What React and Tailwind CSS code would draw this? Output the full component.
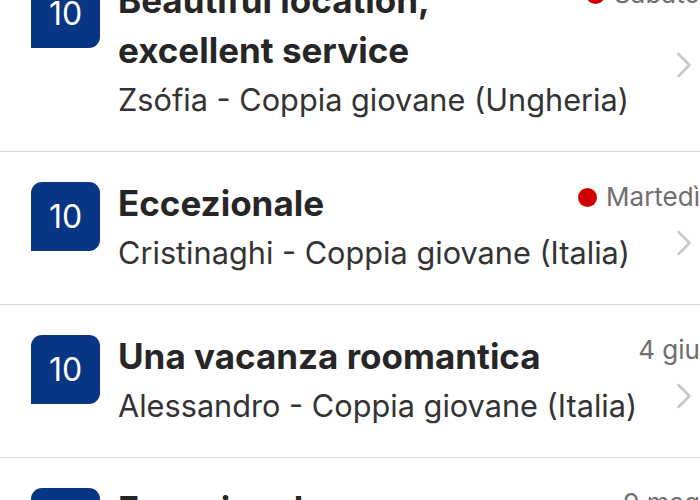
const REVIEWS = [
  {
    id: 1,
    score: 10,
    title: ['Beautiful location,', 'excellent service'],
    author: 'Zsófia - Coppia giovane (Ungheria)',
    date: 'Sabato',
    unread: true,
  },
  {
    id: 2,
    score: 10,
    title: ['Eccezionale'],
    author: 'Cristinaghi - Coppia giovane (Italia)',
    date: 'Martedì',
    unread: true,
  },
  {
    id: 3,
    score: 10,
    title: ['Una vacanza roomantica'],
    author: 'Alessandro - Coppia giovane (Italia)',
    date: '4 giu',
  },
  {
    id: 4,
    score: 10,
    title: ['Eccezionale'],
    author: 'Marco - Famiglia (Italia)',
    date: '9 mag',
  },
]

function Chevron() {
  return (
    <svg width="16" height="26" viewBox="0 0 16 26" fill="none">
      <path d="M2.5 2L13.5 13L2.5 24" stroke="#c7c7cc" strokeWidth="2.6" strokeLinecap="round" strokeLinejoin="round" />
    </svg>
  )
}

function ReviewRow({ review }) {
  return (
    <div className="flex border-b border-[#d6d6d6] pl-[31px]">
      <div className="mt-[30px] flex h-[69px] w-[69px] shrink-0 items-center justify-center rounded-[11px] rounded-bl-none bg-[#083684] pt-[1px] text-[32px] leading-none text-white">
        {review.score}
      </div>
      <div className="ml-[18px] min-w-0 flex-1 pt-[26px] pb-[26px]">
        <div className="flex items-start">
          <h3 className="flex-1 text-[35px] font-bold leading-[50px] text-[#262626]">
            {review.title.map((line, i) => (
              <span key={i} className="block whitespace-nowrap">{line}</span>
            ))}
          </h3>
          <div className="-mr-[40px] mt-[4px] flex shrink-0 items-center whitespace-nowrap text-[26px] leading-[30px] text-[#6e6e6e]">
            {review.unread && <span className="mr-[9px] h-[19px] w-[19px] rounded-full bg-[#d10000]" />}
            {review.date}
          </div>
        </div>
        <p className="whitespace-nowrap text-[30.7px] leading-[50px] text-[#333333]">{review.author}</p>
      </div>
      <div className="flex w-[40px] shrink-0 items-center pl-[16px] pt-[29px]">
        <Chevron />
      </div>
    </div>
  )
}

export default function App() {
  return (
    <div className="h-[500px] w-[700px] overflow-hidden bg-white font-['Inter',_'Liberation_Sans',_sans-serif]">
      <div className="-mt-[51px]">
        {REVIEWS.map((r) => (
          <ReviewRow key={r.id} review={r} />
        ))}
      </div>
    </div>
  )
}
